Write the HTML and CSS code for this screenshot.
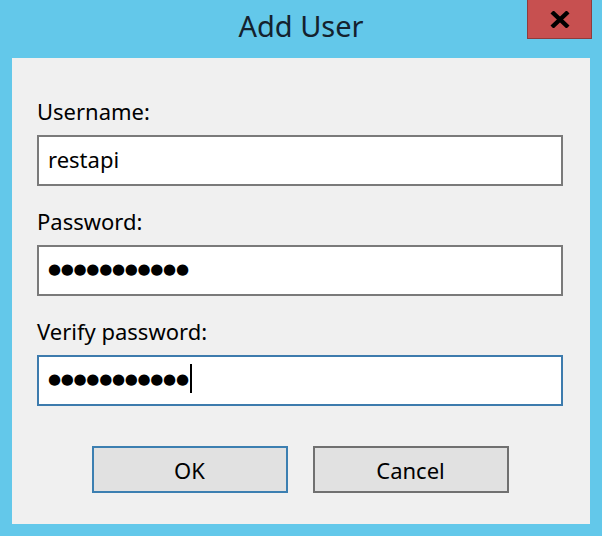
FILE: index.html
```html
<!DOCTYPE html>
<html lang="en">
  <head>
    <meta charset="UTF-8" />
    <meta name="viewport" content="width=device-width, initial-scale=1.0" />
    <title>Add User</title>
    <link rel="stylesheet" href="styles.css">
  </head>
  <body>
    <div class="window">
      <div class="titlebar">
        <h1 class="title">Add User</h1>
        <button class="close" aria-label="Close">
          <svg width="20" height="17" viewBox="0 0 20 17">
            <path d="M2 1 L18 16 M18 1 L2 16" stroke="#000" stroke-width="4.4" fill="none" />
          </svg>
        </button>
      </div>

      <div class="client">
        <div class="field">
          <label>Username:</label>
          <div class="textbox">restapi</div>
        </div>
        <div class="field">
          <label>Password:</label>
          <div class="textbox"><span class="mask">●●●●●●●●●●●</span></div>
        </div>
        <div class="field">
          <label>Verify password:</label>
          <div class="textbox focused"><span class="mask">●●●●●●●●●●●</span><span class="caret"></span></div>
        </div>

        <div class="buttons">
          <button class="btn default">OK</button>
          <button class="btn">Cancel</button>
        </div>
      </div>
    </div>
  </body>
</html>
```

FILE: styles.css
```css
* {
  margin: 0;
  padding: 0;
  box-sizing: border-box;
}

body {
  font-family: "Noto Sans", Arial, sans-serif;
  background: #63c8ea;
  color: #000;
}

.window {
  height: 536px;
  display: flex;
  flex-direction: column;
}

.titlebar {
  height: 58px;
  position: relative;
  text-align: center;
}

.title {
  font-size: 29px;
  font-weight: normal;
  line-height: 40px;
  padding-top: 6px;
  color: #14222e;
}

.close {
  position: absolute;
  top: 0;
  right: 10px;
  width: 65px;
  height: 39px;
  background: #c75050;
  border: 1px solid #8e3c3c;
  border-top: none;
  display: flex;
  align-items: center;
  justify-content: center;
}

.client {
  flex: 1;
  background: #f0f0f0;
  margin: 0 12px 12px;
  padding: 40px 27px 0 25px;
}

.field + .field {
  margin-top: 22px;
}

.field label {
  display: block;
  font-size: 22px;
  line-height: 26px;
  margin-bottom: 11px;
}

.textbox {
  height: 51px;
  background: white;
  border: 2px solid #7a7a7a;
  padding: 0 9px 4px;
  font-size: 22px;
  display: flex;
  align-items: center;
}

.textbox.focused {
  border-color: #3d7bad;
}

.mask {
  font-family: "DejaVu Sans", sans-serif;
  font-size: 15px;
  letter-spacing: -0.3px;
}

.caret {
  display: inline-block;
  width: 2px;
  height: 29px;
  background: #000;
  margin-left: 1px;
}

.buttons {
  display: flex;
  justify-content: center;
  gap: 25px;
  margin-top: 40px;
}

.btn {
  width: 196px;
  height: 47px;
  background: #e1e1e1;
  border: 2px solid #707070;
  font-family: inherit;
  font-size: 22px;
  color: #000;
}

.btn.default {
  border-color: #3c7fb1;
}
```
